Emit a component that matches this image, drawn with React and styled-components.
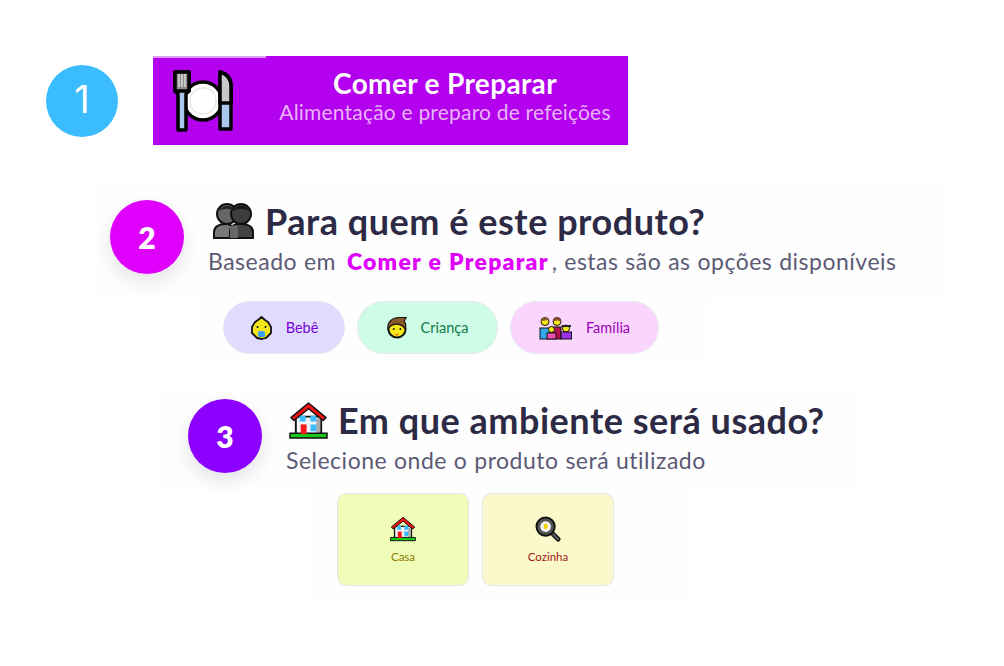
import React from 'react';
import styled, { createGlobalStyle } from 'styled-components';

const Global = createGlobalStyle`
  html, body { margin: 0; padding: 0; background: #fff; }
  body { font-family: "Lato", "Liberation Sans", sans-serif; width: 1004px; height: 666px; overflow: hidden; }
`;

const Page = styled.main`
  display: flex;
  flex-direction: column;
  align-items: flex-start;
  padding-top: 56px;
`;

const StepOneRow = styled.section`
  display: flex;
  align-items: center;
  gap: 35px;
  margin-left: 46px;
`;

const Badge = styled.div`
  width: ${p => p.$size}px;
  height: ${p => p.$size}px;
  flex: none;
  border-radius: 50%;
  background: ${p => p.$color};
  color: #fff;
  display: flex;
  align-items: center;
  justify-content: center;
  font-size: 30px;
  font-weight: 800;
  box-shadow: 0 8px 18px rgba(40, 30, 70, 0.12);
`;

const PlainBadge = styled(Badge)`
  font-family: "Inter", "Liberation Sans", sans-serif;
  font-size: 38px;
  font-weight: 400;
  box-shadow: none;
  padding-bottom: 3px;
  box-sizing: border-box;
`;

const CategoryCard = styled.div`
  position: relative;
  width: 475px;
  height: 89px;
  box-sizing: border-box;
  padding-left: 19px;
  background: #b300ee;
  display: flex;
  align-items: center;
  color: #fff;
  &::before {
    content: '';
    position: absolute;
    left: 0;
    top: 0;
    width: 113px;
    height: 2px;
    background: #dd9cf6;
  }
`;

const CategoryText = styled.div`
  flex: 1;
  padding-left: 28px;
  padding-bottom: 8px;
  text-align: center;
  display: flex;
  flex-direction: column;
  gap: 3px;
`;

const CategoryTitle = styled.div`
  font-size: 28px;
  line-height: 28px;
  font-weight: 700;
  letter-spacing: 0.35px;
`;

const CategorySub = styled.div`
  font-size: 21px;
  line-height: 24px;
  letter-spacing: 0.2px;
  color: #e8b4f8;
  white-space: nowrap;
`;

const Panel = styled.section`
  display: flex;
  align-items: flex-start;
  background: #fefefe;
  box-sizing: border-box;
  margin-left: ${p => p.$left}px;
  margin-top: ${p => p.$top}px;
  width: ${p => p.$width}px;
  height: ${p => p.$height}px;
  padding: ${p => p.$padTop}px 0 0 ${p => p.$pad}px;
  gap: 24px;
`;

const Heading = styled.div`
  display: flex;
  flex-direction: column;
  gap: 5px;
`;

const Title = styled.h2`
  margin: 0 0 0 ${p => p.$indent}px;
  display: flex;
  align-items: center;
  gap: 10px;
  font-size: 36px;
  line-height: 42px;
  font-weight: 700;
  letter-spacing: 0.52px;
  color: #2d2a45;
  white-space: nowrap;
`;

const Sub = styled.p`
  margin: 0;
  font-size: 23px;
  line-height: 28px;
  letter-spacing: 0.5px;
  word-spacing: 0.5px;
  color: #5c5a75;
  white-space: nowrap;
`;

const Highlight = styled.strong`
  color: #df00fb;
  font-weight: 800;
  letter-spacing: 1.2px;
  margin: 0 3px 0 11px;
`;

const OptionStrip = styled.div`
  display: flex;
  background: #fefefe;
  box-sizing: border-box;
  margin-left: ${p => p.$left}px;
  width: ${p => p.$width}px;
  height: ${p => p.$height}px;
  padding: ${p => p.$padY}px 0 0 ${p => p.$padX}px;
  gap: ${p => p.$gap}px;
`;

const Chip = styled.div`
  width: ${p => p.$width}px;
  height: 53px;
  box-sizing: border-box;
  border-radius: 27px;
  border: 1px solid #e8e6f0;
  background: ${p => p.$bg};
  color: ${p => p.$fg};
  display: flex;
  align-items: center;
  justify-content: center;
  gap: 13px;
  font-size: 14.5px;
  font-weight: 400;
`;

const EnvCard = styled.div`
  width: 132px;
  height: 93px;
  box-sizing: border-box;
  border-radius: 9px;
  border: 1px solid #e4e4ea;
  background: ${p => p.$bg};
  color: ${p => p.$fg};
  display: flex;
  flex-direction: column;
  align-items: center;
  padding-top: 22px;
  gap: 8px;
  font-size: 11.500px;
  font-weight: 400;
`;

const Cutlery = () => (
  <svg width="62" height="64" viewBox="0 0 62 64">
    <g stroke="#000" strokeWidth="3.500" strokeLinejoin="round">
      <circle cx="31" cy="32" r="19" fill="#fff" />
      <path d="M3 3h14v19l-3 3v36H6V25l-3-3z" fill="#a9c8ee" />
      <path d="M3 3h14v19H3z" fill="#8c8c8c" />
      <path d="M48 3c7 2 11 7 11 14v43H48z" fill="#a9c8ee" />
      <path d="M48 3c7 2 11 7 11 14v17H48z" fill="#c8c8c8" />
    </g>
    <circle cx="31" cy="32" r="13" fill="none" stroke="#e8e8e8" strokeWidth="1.500" />
    <path d="M7 5v13M10 5v13M13 5v13" stroke="#fff" strokeWidth="1" />
  </svg>
);

const People = () => (
  <svg width="43" height="38" viewBox="0 0 43 38">
    <path d="M2 36v-6c0-5 5-8 11-8h3l6 3v11z" fill="#777" stroke="#111" strokeWidth="2" />
    <path d="M41 36v-6c0-5-5-8-11-8h-5c-4 1-7 4-7 8v6z" fill="#444" stroke="#111" strokeWidth="2" />
    <path d="M18 24c3-1 6-1 8 0v12h-8z" fill="#666" />
    <circle cx="15" cy="12" r="10" fill="#666" stroke="#111" strokeWidth="2" />
    <circle cx="29" cy="12" r="10" fill="#3d3d3d" stroke="#111" strokeWidth="2" />
    <path d="M7 9c3-6 13-7 16 0-5-3-11-3-16 0z" fill="#222" />
    <path d="M21 9c3-6 13-7 16 0-5-3-11-3-16 0z" fill="#151515" />
  </svg>
);

const House = ({ size }) => (
  <svg width={size} height={size} viewBox="0 0 40 40">
    <path d="M7 16h26v20H7z" fill="#eef3f8" stroke="#111" strokeWidth="2" />
    <path d="M32 18v18h-4V18z" fill="#a9a9a9" />
    <path d="M20 2 38 17l-3 3L20 8 5 20l-3-3z" fill="#f01010" stroke="#111" strokeWidth="1.500" strokeLinejoin="round" />
    <path d="M1 33h38v5H1z" fill="#18c818" stroke="#111" strokeWidth="1.500" />
    <path d="M11 15h6v6h-6zM22 15h6v6h-6zM22 24h6v7h-6z" fill="#3cbcff" />
    <path d="M12 24h6v10h-6z" fill="#f01818" />
  </svg>
);

const Baby = () => (
  <svg width="23" height="24" viewBox="0 0 23 24">
    <path d="M11.500 1 15 4l3 2 3 5v6l-5 5-4 1-5-1-5-5v-6l3-5 3-2z" fill="#f5e61a" stroke="#111" strokeWidth="1.800" strokeLinejoin="round" />
    <circle cx="7.500" cy="11" r="1" fill="#111" />
    <circle cx="15.500" cy="11" r="1" fill="#111" />
    <rect x="8" y="15" width="7" height="6" rx="1.500" fill="#3da2f2" />
  </svg>
);

const Child = () => (
  <svg width="21" height="24" viewBox="0 0 22 24">
    <circle cx="10.500" cy="13" r="9" fill="#f5e61a" stroke="#111" strokeWidth="2" />
    <path d="M1 13C0 5 6 1 13 1h7l-2 4c2 2 2 5 1 8-2-3-6-5-9-5-4 0-7 2-9 5z" fill="#8a5a2c" stroke="#111" strokeWidth="1.200" />
    <circle cx="7" cy="13" r="1" fill="#111" />
    <circle cx="14" cy="13" r="1" fill="#111" />
    <path d="M8 18h5l-3 3z" fill="#f08a1a" />
  </svg>
);

const Family = () => (
  <svg width="34" height="24" viewBox="0 0 34 24">
    <rect x="1" y="12" width="11" height="11" fill="#32a8ea" stroke="#111" />
    <rect x="13" y="11" width="9" height="12" fill="#b8104f" stroke="#111" />
    <circle cx="6" cy="5.500" r="4" fill="#f5e61a" stroke="#111" />
    <path d="M2 5c0-4 7-5 8-1z" fill="#8a5a2c" />
    <circle cx="18" cy="5.500" r="4" fill="#f5e61a" stroke="#111" />
    <path d="M14 6c-1-6 9-6 8 0-2-2-6-2-8 0z" fill="#8a4a2c" />
    <circle cx="12.500" cy="13.500" r="3" fill="#f5e61a" stroke="#111" />
    <rect x="8" y="17" width="9" height="6" fill="#f24fb4" stroke="#111" />
    <circle cx="27" cy="12.500" r="3.500" fill="#f5e61a" stroke="#111" />
    <path d="M22 11h10v-2h-9z" fill="#222" />
    <rect x="22" y="16" width="10.500" height="7" fill="#9a32ea" stroke="#111" />
  </svg>
);

const Pan = () => (
  <svg width="26" height="26" viewBox="0 0 27 27">
    <path d="M18 18l6 6" stroke="#111" strokeWidth="5" strokeLinecap="round" />
    <path d="M18 18l6 6" stroke="#666" strokeWidth="2" strokeLinecap="round" />
    <circle cx="11" cy="11" r="9.500" fill="#555" stroke="#111" strokeWidth="2" />
    <circle cx="11" cy="11" r="5.500" fill="#f4f4f4" />
    <rect x="9" y="8" width="4" height="5.500" rx="1.500" fill="#f0cf00" />
  </svg>
);

export default function App() {
  return (
    <Page>
      <Global />
      <StepOneRow>
        <PlainBadge $size={72} $color="#3abcff">1</PlainBadge>
        <CategoryCard>
          <Cutlery />
          <CategoryText>
            <CategoryTitle>Comer e Preparar</CategoryTitle>
            <CategorySub>Alimentação e preparo de refeições</CategorySub>
          </CategoryText>
        </CategoryCard>
      </StepOneRow>

      <Panel $left={95} $top={40} $width={855} $height={115} $pad={15} $padTop={15}>
        <Badge $size={74} $color="#df00fb">2</Badge>
        <Heading>
          <Title $indent={4}><People />Para quem é este produto?</Title>
          <Sub>Baseado em<Highlight>Comer e Preparar</Highlight>, estas são as opções disponíveis</Sub>
        </Heading>
      </Panel>
      <OptionStrip $left={200} $width={510} $height={60} $padX={23} $padY={1} $gap={12}>
        <Chip $width={122} $bg="#e0dcff" $fg="#7a00d8"><Baby />Bebê</Chip>
        <Chip $width={141} $bg="#cffce6" $fg="#0f7a45"><Child />Criança</Chip>
        <Chip $width={149} $bg="#fad6ff" $fg="#9a00b8"><Family />Família</Chip>
      </OptionStrip>

      <Panel $left={155} $top={26} $width={705} $height={102} $pad={33} $padTop={13}>
        <Badge $size={74} $color="#8b00ff">3</Badge>
        <Heading>
          <Title $indent={3}><House size={39} />Em que ambiente será usado?</Title>
          <Sub>Selecione onde o produto será utilizado</Sub>
        </Heading>
      </Panel>
      <OptionStrip $left={310} $width={380} $height={112} $padX={27} $padY={5} $gap={13}>
        <EnvCard $bg="#effdb9" $fg="#8a7a00"><House size={26} />Casa</EnvCard>
        <EnvCard $bg="#fbf8cc" $fg="#a01818"><Pan />Cozinha</EnvCard>
      </OptionStrip>
    </Page>
  );
}
